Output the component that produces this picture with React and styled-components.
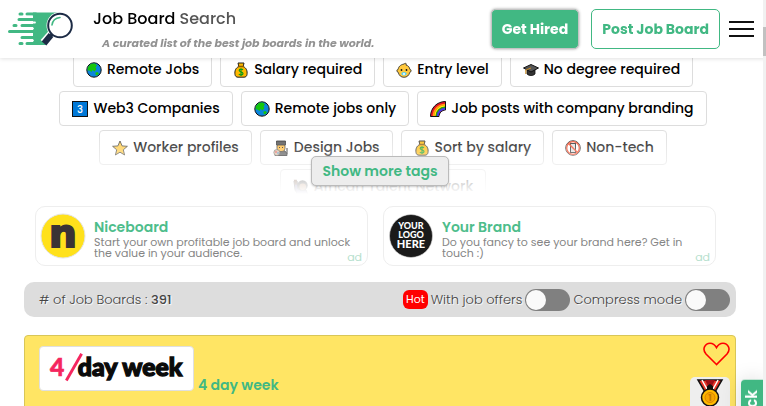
import { useState } from "react";
import styled, { createGlobalStyle } from "styled-components";

const GlobalStyle = createGlobalStyle`
  * {
    box-sizing: border-box;
  }
  body {
    margin: 0;
    background-color: #fff;
    color: #000;
    font-family: Poppins, Inter, "Liberation Sans", sans-serif;
  }
  button,
  input {
    font-family: inherit;
    margin: 0;
  }
`;

const Header = styled.header`
  position: fixed;
  top: 0;
  left: 0;
  right: 0;
  z-index: 10;
  display: flex;
  align-items: center;
  height: 58px;
  padding: 0 12px 0 8px;
  background-color: #fff;
  box-shadow: 0 1px 4px rgba(0, 0, 0, 0.12);
`;

const Brand = styled.a`
  display: flex;
  flex: 1;
  align-items: center;
  gap: 19px;
  color: #000;
  text-decoration: none;
  .title {
    display: block;
    padding-top: 3px;
    font-size: 16px;
    line-height: 24px;
    font-weight: 500;
    span {
      color: #555;
    }
  }
  .slogan {
    display: block;
    padding-left: 9px;
    font-size: 11px;
    line-height: 24px;
    font-weight: 700;
    font-style: italic;
    color: #929292;
    white-space: nowrap;
  }
`;

const HeaderActions = styled.div`
  display: flex;
  align-items: center;
  gap: 12px;
`;

const HeaderButton = styled.button`
  height: 40px;
  padding: 0 10px;
  border: 1px solid ${({ $filled }) => ($filled ? "#c4c4c4" : "#41b883")};
  border-radius: 5px;
  background-color: ${({ $filled }) => ($filled ? "#41b883" : "#fff")};
  color: ${({ $filled }) => ($filled ? "#fff" : "#41b883")};
  box-shadow: ${({ $filled }) => ($filled ? "0 0 3px #999" : "none")};
  font-size: 14px;
  font-weight: 700;
  white-space: nowrap;
`;

const MenuButton = styled.button`
  display: flex;
  flex-direction: column;
  gap: 5px;
  margin-left: 9px;
  padding: 0;
  border: 0;
  background: none;
  span {
    width: 25px;
    height: 2px;
    background-color: #111;
  }
`;

const Tags = styled.section`
  position: relative;
  height: 142px;
  overflow: hidden;
  &::after {
    content: "";
    position: absolute;
    left: 0;
    right: 0;
    bottom: 0;
    height: 68px;
    background: linear-gradient(rgba(255, 255, 255, 0), #fff);
    pointer-events: none;
  }
`;

const TagRow = styled.div`
  display: flex;
  justify-content: center;
  gap: 8px;
  margin-bottom: 4px;
`;

const Tag = styled.button`
  display: flex;
  align-items: center;
  gap: 5px;
  height: 35px;
  padding: 0 12px;
  border: 1px solid #ddd;
  border-radius: 4px;
  background-color: #fff;
  color: #000;
  font-size: 14px;
  font-weight: 500;
  white-space: nowrap;
`;

const MoreRow = styled.div`
  position: relative;
  z-index: 2;
  display: flex;
  justify-content: center;
  height: 30px;
  margin-top: -38px;
  padding-right: 6px;
`;

const MoreButton = styled.button`
  padding: 0 10px;
  border: 1px solid #bbb;
  border-radius: 5px;
  background-color: #ededed;
  box-shadow: 0 1px 2px rgba(0, 0, 0, 0.2);
  color: #41b883;
  font-size: 14px;
  font-weight: 600;
`;

const Main = styled.main`
  padding-top: 52px;
`;

const Content = styled.div`
  padding: 20px 30px 0 24px;
`;

const Ads = styled.div`
  display: grid;
  grid-template-columns: 1fr 1fr;
  gap: 15px;
  padding: 0 20px 0 11px;
`;

const AdCard = styled.a`
  position: relative;
  display: flex;
  align-items: center;
  gap: 8px;
  height: 60px;
  padding: 0 15px 0 4px;
  border: 1px solid #eee;
  border-radius: 10px;
  color: #858585;
  text-decoration: none;
  svg {
    flex-shrink: 0;
  }
  strong {
    display: block;
    padding-top: 3px;
    color: #4dbd8b;
    font-size: 14px;
    line-height: 20px;
    font-weight: 600;
  }
  .text {
    display: block;
    font-size: 11px;
    line-height: 11px;
  }
  .ad {
    position: absolute;
    right: 5px;
    bottom: 1px;
    color: #b5e0cd;
    font-size: 11px;
    line-height: 13px;
  }
`;

const Toolbar = styled.div`
  display: flex;
  align-items: center;
  height: 35px;
  margin: 16px 0 18px;
  padding: 0 6px 0 15px;
  border-radius: 10px;
  background-color: #ddd;
  color: #444;
  font-size: 13px;
  font-weight: 300;
  text-shadow: 1px 1px 1px #fff;
  .count {
    flex: 1;
    b {
      font-weight: 500;
    }
  }
`;

const Option = styled.label`
  display: flex;
  align-items: center;
  gap: 3px;
  margin-left: 3px;
`;

const Hot = styled.span`
  padding: 0 3px;
  border-radius: 6px;
  background-color: #f00;
  color: #fff;
  font-size: 11px;
  line-height: 19px;
  font-weight: 400;
  text-shadow: none;
`;

const Switch = styled.input`
  appearance: none;
  display: flex;
  justify-content: ${({ checked }) => (checked ? "flex-end" : "flex-start")};
  width: 45px;
  height: 22px;
  padding: 1px;
  border-radius: 11px;
  background-color: ${({ checked }) => (checked ? "#41b883" : "#808080")};
  &::before {
    content: "";
    width: 20px;
    height: 20px;
    border-radius: 50%;
    background-color: #fafafa;
  }
`;

const Board = styled.article`
  display: flex;
  align-items: flex-start;
  justify-content: space-between;
  min-height: 150px;
  padding: 6px 5px 10px 14px;
  border: 1px solid #d8c658;
  border-radius: 4px;
  background-color: #ffe564;
`;

const BoardLink = styled.a`
  display: flex;
  align-items: flex-end;
  gap: 4px;
  padding-top: 4px;
  color: #41b883;
  font-size: 14px;
  line-height: 20px;
  font-weight: 600;
  text-decoration: none;
  span {
    margin-bottom: -4px;
  }
`;

const BoardLogo = styled.svg`
  border: 1px solid #dfdfdf;
  border-radius: 4px;
  background-color: #fff;
`;

const BoardSide = styled.div`
  display: flex;
  flex-direction: column;
  align-items: flex-end;
  gap: 11px;
`;

const HeartButton = styled.button`
  display: flex;
  padding: 0;
  border: 0;
  background: none;
`;

const Medal = styled.div`
  display: flex;
  justify-content: center;
  width: 40px;
  height: 40px;
  padding-top: 2px;
  border-radius: 5px;
  background-color: #eee;
`;

const Feedback = styled.button`
  position: fixed;
  top: 380px;
  right: 3px;
  width: 22px;
  padding: 10px 0;
  border: 0;
  border-radius: 0 4px 4px 0;
  background-color: #41b883;
  box-shadow: 0 0 20px rgba(0, 0, 0, 0.15);
  color: #fff;
  font-size: 15px;
  line-height: 22px;
  font-weight: 600;
  writing-mode: vertical-rl;
  transform: rotate(180deg);
`;

const ScrollTrack = styled.div`
  position: fixed;
  top: 0;
  right: 0;
  bottom: 0;
  z-index: 20;
  width: 3px;
  padding-top: 27px;
  background-color: #f1f1f1;
  &::before {
    content: "";
    display: block;
    height: 29px;
    background-color: #c1c1c1;
  }
`;

const emoji = {
  globe: (
    <>
      <circle cx="8" cy="8" r="7.2" fill="#0a84dc" stroke="#111" />
      <path d="M2 5 5 1.800 9 1.500 11 3.500 9.500 5.500 10.500 7 8.500 9.500 6.500 8 5.500 10 3.500 8.500 1.500 8.500Z" fill="#16c60c" />
      <path d="m9.500 10.500 2-.5 1.500 1.500-2 2-1.500-1Z" fill="#16c60c" />
    </>
  ),
  money: (
    <>
      <path d="M5 1h6l-.8 3.500C13.500 6 14.500 9 14 12.500c-.3 2-1.500 2.700-3 2.700H5c-1.500 0-2.700-.7-3-2.700C1.500 9 2.500 6 5.800 4.500Z" fill="#ffb900" stroke="#222" />
      <path d="M5 4.500h6" stroke="#8a5a00" strokeWidth="1.500" />
      <path d="M10 7.800c-1-.9-3.800-.9-3.800.7S10 9.700 10 11.500s-3 1.700-4.200.6M8 6.300v7.700" fill="none" stroke="#0c9a15" strokeWidth="1.200" />
    </>
  ),
  baby: (
    <>
      <path d="M8 2C10 .5 11 2 9.800 3c3 .8 3.700 2.500 4 4.300 1.800.3 1.800 2.700 0 3C13 13.500 11 15.300 8 15.300s-5-1.800-5.800-5c-1.800-.3-1.800-2.700 0-3C2.500 5 4 2.800 8 2Z" fill="#ffc83d" stroke="#222" strokeWidth=".8" />
      <circle cx="5.500" cy="8" r=".9" fill="#111" />
      <circle cx="10.500" cy="8" r=".9" fill="#111" />
      <ellipse cx="8" cy="11.800" rx="2.700" ry="1.800" fill="#5bd3f5" />
      <circle cx="8" cy="12" r="1" fill="#fff" />
    </>
  ),
  cap: (
    <>
      <path d="M4 7v5c2 2 6 2 8 0V7Z" fill="#333" stroke="#111" strokeWidth=".8" />
      <path d="M.5 6 8 2.500 15.500 6 8 10Z" fill="#555" stroke="#111" />
      <path d="M8 6 2.800 8v4" fill="none" stroke="#c98b20" />
    </>
  ),
  three: (
    <>
      <rect x=".5" y=".5" width="15" height="15" fill="#0078d7" stroke="#111" />
      <text x="8" y="12" textAnchor="middle" fontSize="10" fontWeight="500" fill="#fff">3</text>
    </>
  ),
  rainbow: (
    <>
      <path d="M.5 15.500C.5 7 7 .5 15.500.5V9C12 9 9 12 9 15.500Z" fill="#e81224" stroke="#111" />
      <path d="M3.500 15C3.500 8.500 8.500 3.500 15 3.500" fill="none" stroke="#ff9b12" strokeWidth="1.600" />
      <path d="M5 15C5 9.500 9.500 5 15 5" fill="none" stroke="#fff100" strokeWidth="1.400" />
      <path d="M6.300 15C6.300 10.200 10.200 6.300 15 6.300" fill="none" stroke="#16a51c" strokeWidth="1.400" />
      <path d="M7.800 15C7.800 11 11 7.800 15 7.800" fill="none" stroke="#3a3ff0" strokeWidth="1.800" />
    </>
  ),
  star: (
    <path d="m8 1 2.100 4.900 5.300.4-4.100 3.500 1.300 5.200L8 12.200 3.400 15l1.300-5.200L.6 6.300l5.300-.4Z" fill="#ffc83d" stroke="#222" strokeWidth=".8" />
  ),
  artist: (
    <>
      <path d="M2 15.500C2 11 5 10.500 8 10.500s6 .5 6 5Z" fill="#444" stroke="#111" />
      <rect x="4" y="3" width="8" height="8.500" rx="3" fill="#ffb52e" stroke="#222" strokeWidth=".8" />
      <path d="M3.500 5V1h9v4Z" fill="#444" stroke="#111" strokeWidth=".8" />
      <path d="M6.500 7v1M9.500 7v1" stroke="#111" />
      <circle cx="3.800" cy="12.500" r="3" fill="#d9b99b" stroke="#444" strokeWidth=".6" />
      <circle cx="3" cy="12" r=".8" fill="#e81224" />
      <circle cx="5" cy="13" r=".8" fill="#0078d7" />
      <path d="M14 8v6" stroke="#222" strokeWidth="1.200" />
    </>
  ),
  hand: (
    <>
      <path d="M1 2h3l1 8 3 1h5l2 5H5L2 11Z" fill="#5a5090" stroke="#222" />
      <path d="M.8.8h3v5h-2Z" fill="#603a20" />
      <circle cx="9.500" cy="6.500" r="5.200" fill="#222" />
      <rect x="6.500" y="4.500" width="6.500" height="6.500" rx="3" fill="#b07850" />
    </>
  ),
  nophone: (
    <>
      <circle cx="8" cy="8" r="7.300" fill="#fff" stroke="#222" strokeWidth="1" />
      <rect x="5.500" y="3.500" width="5" height="9" fill="#ddd" stroke="#222" />
      <circle cx="8" cy="8" r="6.300" fill="none" stroke="#f03a17" strokeWidth="1.300" />
      <path d="m3.500 3.500 9 9" stroke="#f03a17" strokeWidth="1.400" />
    </>
  ),
};

const tagRows = [
  [
    ["globe", "Remote Jobs"],
    ["money", "Salary required"],
    ["baby", "Entry level"],
    ["cap", "No degree required"],
  ],
  [
    ["three", "Web3 Companies"],
    ["globe", "Remote jobs only"],
    ["rainbow", "Job posts with company branding"],
  ],
  [
    ["star", "Worker profiles"],
    ["artist", "Design Jobs"],
    ["money", "Sort by salary"],
    ["nophone", "Non-tech"],
  ],
  [["hand", "African Talent Network"]],
];

function Logo() {
  return (
    <svg width="66" height="34" viewBox="0 0 66 34" aria-hidden="true">
      <path d="M25 .5h27L38 33H25Z" fill="#41b883" />
      <g stroke="#41b883" strokeWidth="3" strokeLinecap="round">
        <path d="M12 2h2M19 2h9M11 7.500h17M6 13.500h2M14 13.500h14M1.500 19.500h27M14 25.500h14M12 31.500h2M19 31.500h9" />
      </g>
      <path d="M24 4.700h-7M27 10.500h-6M25 16.500h-2M24 22.500h-3M25 28.500h-4" stroke="#fff" strokeWidth="1.800" strokeLinecap="round" />
      <circle cx="52" cy="13.500" r="13.500" fill="#fff" />
      <path d="m44 22-8 9" stroke="#fff" strokeWidth="9" />
      <path d="m45 21-3 4" stroke="#1c2b45" strokeWidth="3" />
      <path d="m43 23-7 8.500" stroke="#1c2b45" strokeWidth="6" />
      <circle cx="52" cy="13.500" r="11.800" fill="#fff" stroke="#1c2b45" strokeWidth="2" />
      <path d="M44 13c.5-4 3.500-7 8-7.500" fill="none" stroke="#41b883" strokeWidth="1.600" strokeLinecap="round" />
    </svg>
  );
}

function NiceboardLogo() {
  return (
    <svg width="46" height="46" viewBox="0 0 46 46" aria-hidden="true">
      <circle cx="23" cy="23" r="22" fill="#ffe11b" stroke="#e4e4e4" />
      <text
        x="23"
        y="34"
        textAnchor="middle"
        fontFamily="'DejaVu Sans', sans-serif"
        fontSize="39"
        fontWeight="700"
        fill="#3a3335"
        stroke="#3a3335"
        strokeWidth="2"
      >
        n
      </text>
    </svg>
  );
}

function YourLogo() {
  return (
    <svg width="46" height="46" viewBox="0 0 46 46" aria-hidden="true">
      <circle cx="23" cy="23" r="21.500" fill="#1a1a1a" stroke="#ddd" strokeWidth=".6" />
      <g fill="#fff" fontFamily="Lato, sans-serif" fontWeight="900" textAnchor="middle">
        <text x="23" y="16" fontSize="9">YOUR</text>
        <text x="23" y="25" fontSize="9">LOGO</text>
        <text x="23" y="35" fontSize="11">HERE</text>
      </g>
    </svg>
  );
}

function MedalIcon() {
  return (
    <svg width="28" height="28" viewBox="0 0 28 28" aria-label="Gold medal">
      <path d="M2 1h24l-7 12H9Z" fill="#e8352a" stroke="#111" strokeWidth="1.500" />
      <path d="M9 1h10l-3 6h-4Z" fill="#9c0f18" />
      <path d="m6 1 6 11M22 1l-6 11" stroke="#fff" strokeWidth="1.500" />
      <path d="m11 7 3-2 3 2v4h-6Z" fill="#111" />
      <circle cx="14" cy="18.500" r="8.500" fill="#ffb900" stroke="#111" strokeWidth="1.500" />
      <circle cx="14" cy="18.500" r="5" fill="#f7a400" stroke="#d88600" />
      <text x="14" y="22" textAnchor="middle" fontSize="9" fontWeight="700" fill="#c47a00">1</text>
    </svg>
  );
}

function App() {
  const [offers, setOffers] = useState(false);
  const [compress, setCompress] = useState(false);

  return (
    <>
      <GlobalStyle />
      <Header>
        <Brand href="#">
          <Logo />
          <span>
            <span className="title">
              Job Board <span>Search</span>
            </span>
            <span className="slogan">A curated list of the best job boards in the world.</span>
          </span>
        </Brand>
        <HeaderActions>
          <HeaderButton $filled>Get Hired</HeaderButton>
          <HeaderButton>Post Job Board</HeaderButton>
        </HeaderActions>
        <MenuButton aria-label="Menu">
          <span />
          <span />
          <span />
        </MenuButton>
      </Header>
      <Main>
        <Tags>
          {tagRows.map((row) => (
            <TagRow key={row[0][1]}>
              {row.map(([icon, label]) => (
                <Tag key={label}>
                  <svg width="16" height="16" viewBox="0 0 16 16" aria-hidden="true">
                    {emoji[icon]}
                  </svg>
                  {label}
                </Tag>
              ))}
            </TagRow>
          ))}
        </Tags>
        <MoreRow>
          <MoreButton>Show more tags</MoreButton>
        </MoreRow>
        <Content>
          <Ads>
            <AdCard href="#">
              <NiceboardLogo />
              <span>
                <strong>Niceboard</strong>
                <span className="text">Start your own profitable job board and unlock the value in your audience.</span>
              </span>
              <span className="ad">ad</span>
            </AdCard>
            <AdCard href="#">
              <YourLogo />
              <span>
                <strong>Your Brand</strong>
                <span className="text">Do you fancy to see your brand here? Get in touch :)</span>
              </span>
              <span className="ad">ad</span>
            </AdCard>
          </Ads>
          <Toolbar>
            <span className="count">
              # of Job Boards : <b>391</b>
            </span>
            <Option>
              <Hot>Hot</Hot>
              With job offers
              <Switch type="checkbox" checked={offers} onChange={() => setOffers(!offers)} />
            </Option>
            <Option>
              Compress mode
              <Switch type="checkbox" checked={compress} onChange={() => setCompress(!compress)} />
            </Option>
          </Toolbar>
          <Board>
            <BoardLink href="#">
              <BoardLogo width="155" height="45" viewBox="0 0 155 45" aria-hidden="true">
                <g fontFamily="Lato, sans-serif" fontWeight="900" fontSize="26">
                  <text x="8" y="30" fill="#f5265f" stroke="#f5265f" strokeWidth=".6">4</text>
                  <text x="37" y="30" fill="#0b0b0b" stroke="#0b0b0b" strokeWidth="1.400">day week</text>
                </g>
                <path d="m25 35 16-28" stroke="#f5265f" strokeWidth="3" />
              </BoardLogo>
              <span>4 day week</span>
            </BoardLink>
            <BoardSide>
              <HeartButton aria-label="Add to favourites">
                <svg width="27" height="24" viewBox="0 0 27 24">
                  <path
                    d="M13.500 22.500 3 12C-1.500 6.500 2.500 1.200 7 1.200c3 0 5 1.600 6.500 4.300C15 2.800 17 1.200 20 1.200c4.500 0 8.500 5.300 4 10.800Z"
                    fill="none"
                    stroke="#f00"
                    strokeWidth="1.600"
                  />
                </svg>
              </HeartButton>
              <Medal>
                <MedalIcon />
              </Medal>
            </BoardSide>
          </Board>
        </Content>
      </Main>
      <Feedback>Feedback</Feedback>
      <ScrollTrack />
    </>
  );
}

export default App;
